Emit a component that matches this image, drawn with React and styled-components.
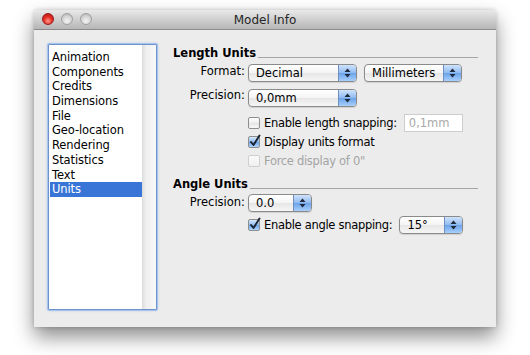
import styled, { createGlobalStyle } from "styled-components";

const GlobalStyle = createGlobalStyle`
  html, body {
    margin: 0;
    padding: 0;
    background: #ffffff;
  }
  body {
    font-family: "DejaVu Sans", "Liberation Sans", sans-serif;
    font-size: 11.5px;
    color: #000;
  }
`;

const Page = styled.div`
  width: 530px;
  height: 355px;
  padding: 10px 0 0 34px;
  box-sizing: border-box;
`;

const Window = styled.div`
  width: 462px;
  height: 317px;
  display: flex;
  flex-direction: column;
  background: #ececec;
  box-shadow: 0 10px 20px rgba(0, 0, 0, 0.45), 0 0 4px rgba(0, 0, 0, 0.2);
  border-radius: 4px 4px 0 0;
`;

const TitleBar = styled.div`
  position: relative;
  height: 19px;
  display: flex;
  align-items: center;
  justify-content: center;
  background: linear-gradient(#e9e9e9, #cfcfcf 50%, #b6b6b6);
  border-bottom: 1px solid #8c8c8c;
  border-radius: 4px 4px 0 0;
  font-size: 12px;
  color: #262626;
`;

const Lights = styled.div`
  position: absolute;
  left: 8px;
  top: 3px;
  display: flex;
  gap: 7px;
`;

const Light = styled.span`
  width: 12px;
  height: 12px;
  border-radius: 50%;
  box-sizing: border-box;
  border: 1px solid ${(p) => (p.$red ? "#9a1c1c" : "#a0a0a0")};
  background: ${(p) =>
    p.$red
      ? "radial-gradient(circle at 50% 70%, #ff9a8e 0%, #e8332a 45%, #a61010 100%)"
      : "radial-gradient(circle at 50% 70%, #f4f4f4 0%, #d4d4d4 55%, #a9a9a9 100%)"};
`;

const Body = styled.div`
  flex: 1;
  display: flex;
  gap: 16px;
  padding: 14px 18px 17px 14px;
`;

const ListBox = styled.div`
  width: 109px;
  box-sizing: border-box;
  display: flex;
  background: #fff;
  border: 1px solid #6d93cf;
  box-shadow: 0 0 0 1px #a9c4ec, 0 0 3px #8db0e4;
  border-radius: 1px;
  padding: 5px 0 0 1px;
`;

const Items = styled.div`
  flex: 1;
  display: flex;
  flex-direction: column;
`;

const Item = styled.div`
  height: 14.7px;
  line-height: 14.7px;
  padding-left: 2px;
  white-space: nowrap;
  letter-spacing: -0.1px;
  color: ${(p) => (p.$selected ? "#fff" : "#000")};
  background: ${(p) => (p.$selected ? "#3875d7" : "transparent")};
`;

const Track = styled.div`
  width: 14px;
  margin-top: -5px;
  background: linear-gradient(to right, #dcdcdc, #efefef 30%, #f8f8f8);
`;

const Panel = styled.div`
  flex: 1;
  display: flex;
  flex-direction: column;
  padding-top: 2px;
`;

const GroupHead = styled.div`
  display: flex;
  align-items: flex-end;
  font-weight: bold;
  height: 14px;
  margin-top: ${(p) => p.$top || 0}px;
  &::after {
    content: "";
    flex: 1;
    border-bottom: 1px solid #a6a6a6;
    margin: 0 0 2px 2px;
  }
`;

const Grid = styled.div`
  display: grid;
  grid-template-columns: 72px 214px;
  column-gap: 3px;
  align-items: center;
`;

const Label = styled.div`
  text-align: right;
  white-space: nowrap;
`;

const Cell = styled.div`
  display: flex;
  align-items: center;
  gap: 7px;
  height: ${(p) => p.$h || 18}px;
  margin-top: ${(p) => p.$top || 0}px;
  justify-content: ${(p) => (p.$spread ? "space-between" : "flex-start")};
`;

const PopupBox = styled.div`
  flex: none;
  width: ${(p) => p.$w}px;
  height: 18px;
  box-sizing: border-box;
  display: flex;
  border: 1px solid #8a8a8a;
  border-radius: 4px;
  overflow: hidden;
  background: linear-gradient(#ffffff, #f4f4f4 50%, #e6e6e6 51%, #f6f6f6);
  box-shadow: 0 1px 1px rgba(0, 0, 0, 0.12);
`;

const PopupText = styled.div`
  flex: 1;
  padding-left: 7px;
  line-height: 16px;
  white-space: nowrap;
`;

const PopupArrows = styled.div`
  width: 17px;
  display: flex;
  align-items: center;
  justify-content: center;
  border-left: 1px solid #6f8fbf;
  background: linear-gradient(#cfe3fb, #8fbaf0 50%, #6aa2ea 51%, #a8d0fb);
`;

const Popup = ({ w, children }) => (
  <PopupBox $w={w}>
    <PopupText>{children}</PopupText>
    <PopupArrows>
      <svg width="7" height="10" viewBox="0 0 7 10">
        <path d="M3.5 0.5 L6.5 4 L0.5 4 Z" fill="#1f2a3a" />
        <path d="M3.5 9.5 L6.5 6 L0.5 6 Z" fill="#1f2a3a" />
      </svg>
    </PopupArrows>
  </PopupBox>
);

const Check = styled.label`
  display: flex;
  align-items: center;
  gap: 4px;
  white-space: nowrap;
  letter-spacing: -0.3px;
  color: ${(p) => (p.$disabled ? "#a4a4a4" : "#000")};
`;

const Box = styled.span`
  position: relative;
  flex: none;
  width: 12px;
  height: 12px;
  box-sizing: border-box;
  border-radius: 2px;
  border: 1px solid ${(p) => (p.$disabled ? "#cfcfcf" : "#8e8e8e")};
  background: ${(p) =>
    p.$checked
      ? "linear-gradient(#d6e8fc, #92bdf1 50%, #6aa3ea 51%, #b2d6fb)"
      : p.$disabled
      ? "linear-gradient(#fafafa, #f0f0f0)"
      : "linear-gradient(#ffffff, #ededed 50%, #e2e2e2 51%, #f8f8f8)"};
  svg {
    position: absolute;
    left: 0;
    top: -3px;
  }
`;

const CheckBox = ({ checked, disabled, children }) => (
  <Check $disabled={disabled}>
    <Box $checked={checked} $disabled={disabled}>
      {checked && (
        <svg width="13" height="13" viewBox="0 0 13 13">
          <path
            d="M2 8 L4.5 11 L10.5 1.5"
            fill="none"
            stroke="#1b2230"
            strokeWidth="1.9"
            strokeLinecap="round"
            strokeLinejoin="round"
          />
        </svg>
      )}
    </Box>
    {children}
  </Check>
);

const TextField = styled.div`
  flex: none;
  width: 59px;
  height: 18px;
  box-sizing: border-box;
  border: 1px solid #cdcdcd;
  background: #fff;
  color: #a9a9a9;
  padding-left: 4px;
  line-height: 16px;
`;

const items = [
  "Animation",
  "Components",
  "Credits",
  "Dimensions",
  "File",
  "Geo-location",
  "Rendering",
  "Statistics",
  "Text",
  "Units",
];

export default function App() {
  return (
    <>
      <GlobalStyle />
      <Page>
        <Window>
          <TitleBar>
            <Lights>
              <Light $red />
              <Light />
              <Light />
            </Lights>
            Model Info
          </TitleBar>
          <Body>
            <ListBox>
              <Items>
                {items.map((name) => (
                  <Item key={name} $selected={name === "Units"}>
                    {name}
                  </Item>
                ))}
              </Items>
              <Track />
            </ListBox>
            <Panel>
              <GroupHead>Length Units</GroupHead>
              <Grid>
                <Label>Format:</Label>
                <Cell $top={4}>
                  <Popup w={109}>Decimal</Popup>
                  <Popup w={98}>Millimeters</Popup>
                </Cell>
                <Label>Precision:</Label>
                <Cell $top={7}>
                  <Popup w={109}>0,0mm</Popup>
                </Cell>
                <span />
                <Cell $top={7} $spread>
                  <CheckBox>Enable length snapping:</CheckBox>
                  <TextField>0,1mm</TextField>
                </Cell>
                <span />
                <Cell $top={1}>
                  <CheckBox checked>Display units format</CheckBox>
                </Cell>
                <span />
                <Cell $top={1}>
                  <CheckBox disabled>Force display of 0"</CheckBox>
                </Cell>
              </Grid>
              <GroupHead $top={7}>Angle Units</GroupHead>
              <Grid>
                <Label>Precision:</Label>
                <Cell $top={3}>
                  <Popup w={64}>0.0</Popup>
                </Cell>
                <span />
                <Cell $top={4} $spread>
                  <CheckBox checked>Enable angle snapping:</CheckBox>
                  <Popup w={64}>15°</Popup>
                </Cell>
              </Grid>
            </Panel>
          </Body>
        </Window>
      </Page>
    </>
  );
}
